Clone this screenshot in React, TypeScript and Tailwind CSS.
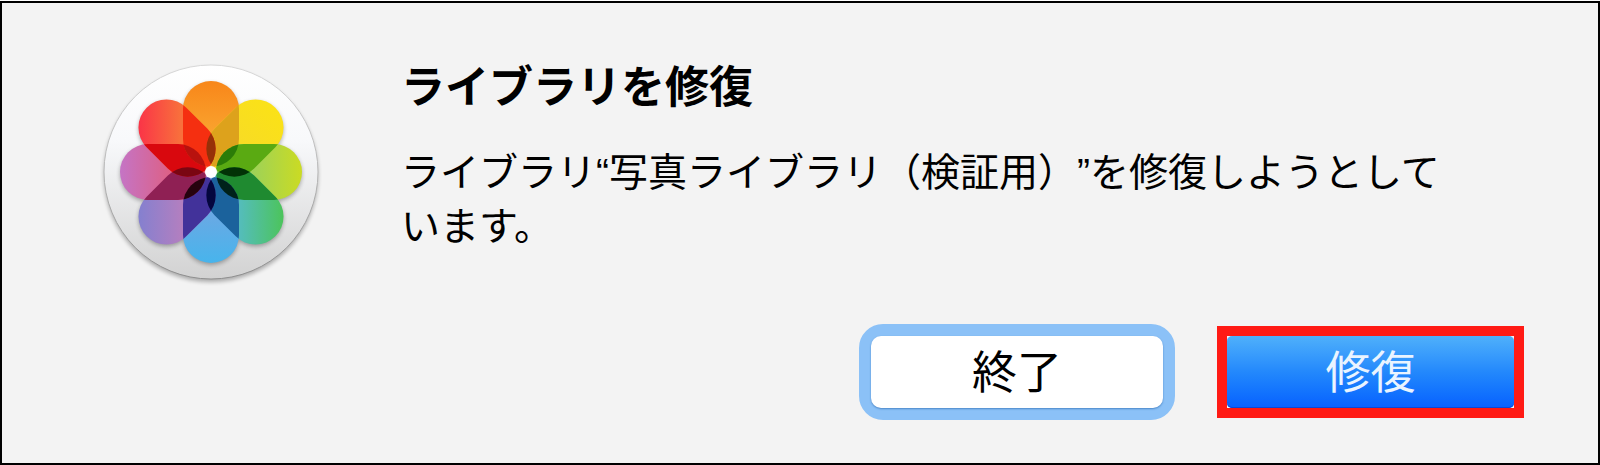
const petals = [
    { angle: 0, from: '#f8871a', to: '#faa832', fx: 0, fy: -1 },
    { angle: 45, from: '#fbe314', to: '#f8dc24', fx: 1, fy: -1 },
    { angle: 90, from: '#cadb24', to: '#93d064', fx: 1, fy: 0 },
    { angle: 135, from: '#4cc45c', to: '#54bdb8', fx: 1, fy: 0 },
    { angle: 180, from: '#48b4ec', to: '#72a6e2', fx: 0, fy: 1 },
    { angle: 225, from: '#8580cf', to: '#b27fc0', fx: -1, fy: 0 },
    { angle: 270, from: '#c574c4', to: '#e25c78', fx: -1, fy: 0 },
    { angle: 315, from: '#fa3547', to: '#f8703c', fx: -1, fy: 0 },
]

// Petal i over petal i + 1
const overlaps = ['#dda21c', '#5aaa12', '#1f8a30', '#1b629c', '#42329a', '#8f2054', '#d9080e', '#f52f10']

// Petal i over petal i + 2
const lenses = ['#2c7c08', '#023206', '#00211a', '#04063e', '#26020e', '#7a0612', '#b8120e', '#963008']

function PhotosIcon() {
    return (
        <svg viewBox="-120 -120 240 240" className="h-60 w-60 shrink-0" aria-hidden="true">
            <defs>
                <linearGradient id="disc" x1="0" y1="0" x2="0" y2="1">
                    <stop offset="0" stopColor="#ffffff" />
                    <stop offset="0.35" stopColor="#f8f9fb" />
                    <stop offset="1" stopColor="#d2d2d2" />
                </linearGradient>
                <linearGradient id="rim" x1="0" y1="0" x2="0" y2="1">
                    <stop offset="0" stopColor="#d8d8d8" />
                    <stop offset="0.5" stopColor="#b8b8b8" />
                    <stop offset="1" stopColor="#8e8e8e" />
                </linearGradient>
                <filter id="soft" x="-20%" y="-20%" width="140%" height="140%">
                    <feGaussianBlur stdDeviation="2" />
                </filter>
                {petals.map((p, i) => (
                    <linearGradient
                        key={p.angle}
                        id={`fill${i}`}
                        gradientUnits="userSpaceOnUse"
                        x1={p.fx * (p.angle % 90 ? 72 : 90)}
                        y1={p.fy * (p.angle % 90 ? 72 : 90)}
                        x2={p.fx * 30}
                        y2={p.fy * 30}
                    >
                        <stop offset="0" stopColor={p.from} />
                        <stop offset="1" stopColor={p.to} />
                    </linearGradient>
                ))}
                {petals.map((p, i) => (
                    <clipPath key={p.angle} id={`clip${i}`}>
                        <rect x="-28" y="-91" width="56" height="86" rx="28" transform={`rotate(${p.angle})`} />
                    </clipPath>
                ))}
            </defs>

            <circle cx="0" cy="3" r="107" fill="#000" opacity="0.3" filter="url(#soft)" />
            <circle cx="0" cy="0" r="107" fill="url(#disc)" stroke="url(#rim)" strokeWidth="1" />

            <g filter="url(#soft)" opacity="0.3">
                {petals.map((p) => (
                    <rect key={p.angle} x="-28" y="-91" width="56" height="86" rx="28" transform={`translate(0 2) rotate(${p.angle})`} />
                ))}
            </g>
            {petals.map((p, i) => (
                <g key={p.angle} clipPath={`url(#clip${i})`}>
                    <rect x="-100" y="-100" width="200" height="200" fill={`url(#fill${i})`} />
                </g>
            ))}
            {petals.map((p, i) => (
                <g key={p.angle} clipPath={`url(#clip${i})`}>
                    <g clipPath={`url(#clip${(i + 1) % 8})`}>
                        <rect x="-100" y="-100" width="200" height="200" fill={overlaps[i]} />
                    </g>
                </g>
            ))}
            {petals.map((p, i) => (
                <g key={p.angle} clipPath={`url(#clip${i})`}>
                    <g clipPath={`url(#clip${(i + 2) % 8})`}>
                        <rect x="-100" y="-100" width="200" height="200" fill={lenses[i]} />
                    </g>
                </g>
            ))}
            <circle cx="0" cy="0" r="6" fill="#fff" />
        </svg>
    )
}

export default function App() {
    return (
        <div className="pt-px font-['Liberation_Sans','Noto_Sans_CJK_JP',sans-serif] [text-spacing-trim:space-all]">
            <main
                role="alertdialog"
                aria-labelledby="dialog-title"
                aria-describedby="dialog-text"
                className="border-2 border-black bg-[#f3f3f3] pt-[49px] pb-[43px] text-black"
            >
                <div className="flex items-start gap-[70px] pr-36 pl-[89px]">
                    <PhotosIcon />
                    <div lang="ja" className="min-w-0 flex-1 pt-[6px]">
                        <h1 id="dialog-title" className="text-[44px] leading-[60px] font-bold">
                            ライブラリを修復
                        </h1>
                        <p id="dialog-text" className="mt-7 text-[39px] leading-[54px]">
                            ライブラリ“写真ライブラリ（検証用）”を修復しようとしています。
                        </p>
                    </div>
                </div>

                <div lang="ja" className="mt-8 flex items-start justify-end gap-[42px] pr-[74px] text-[45px] leading-[68px]">
                    <button
                        type="button"
                        className="w-[316px] rounded-3xl border-12 border-[#8bc1f7] bg-[#8bc1f7]"
                    >
                        <span className="block rounded-[10px] bg-white pt-1 shadow-[0_1px_2px_#4a86c8]">終了</span>
                    </button>
                    <div className="mt-[2px] w-[307px] border-10 border-[#ff1a14]">
                        <button
                            type="button"
                            className="block w-full rounded-[5px] bg-linear-to-b from-[#4fb0fb] via-[#2388fc] to-[#0a60ff] pt-1 text-[#eaf4ff] shadow-[inset_0_-1px_0_#0a48d8]"
                        >
                            修復
                        </button>
                    </div>
                </div>
            </main>
        </div>
    )
}
